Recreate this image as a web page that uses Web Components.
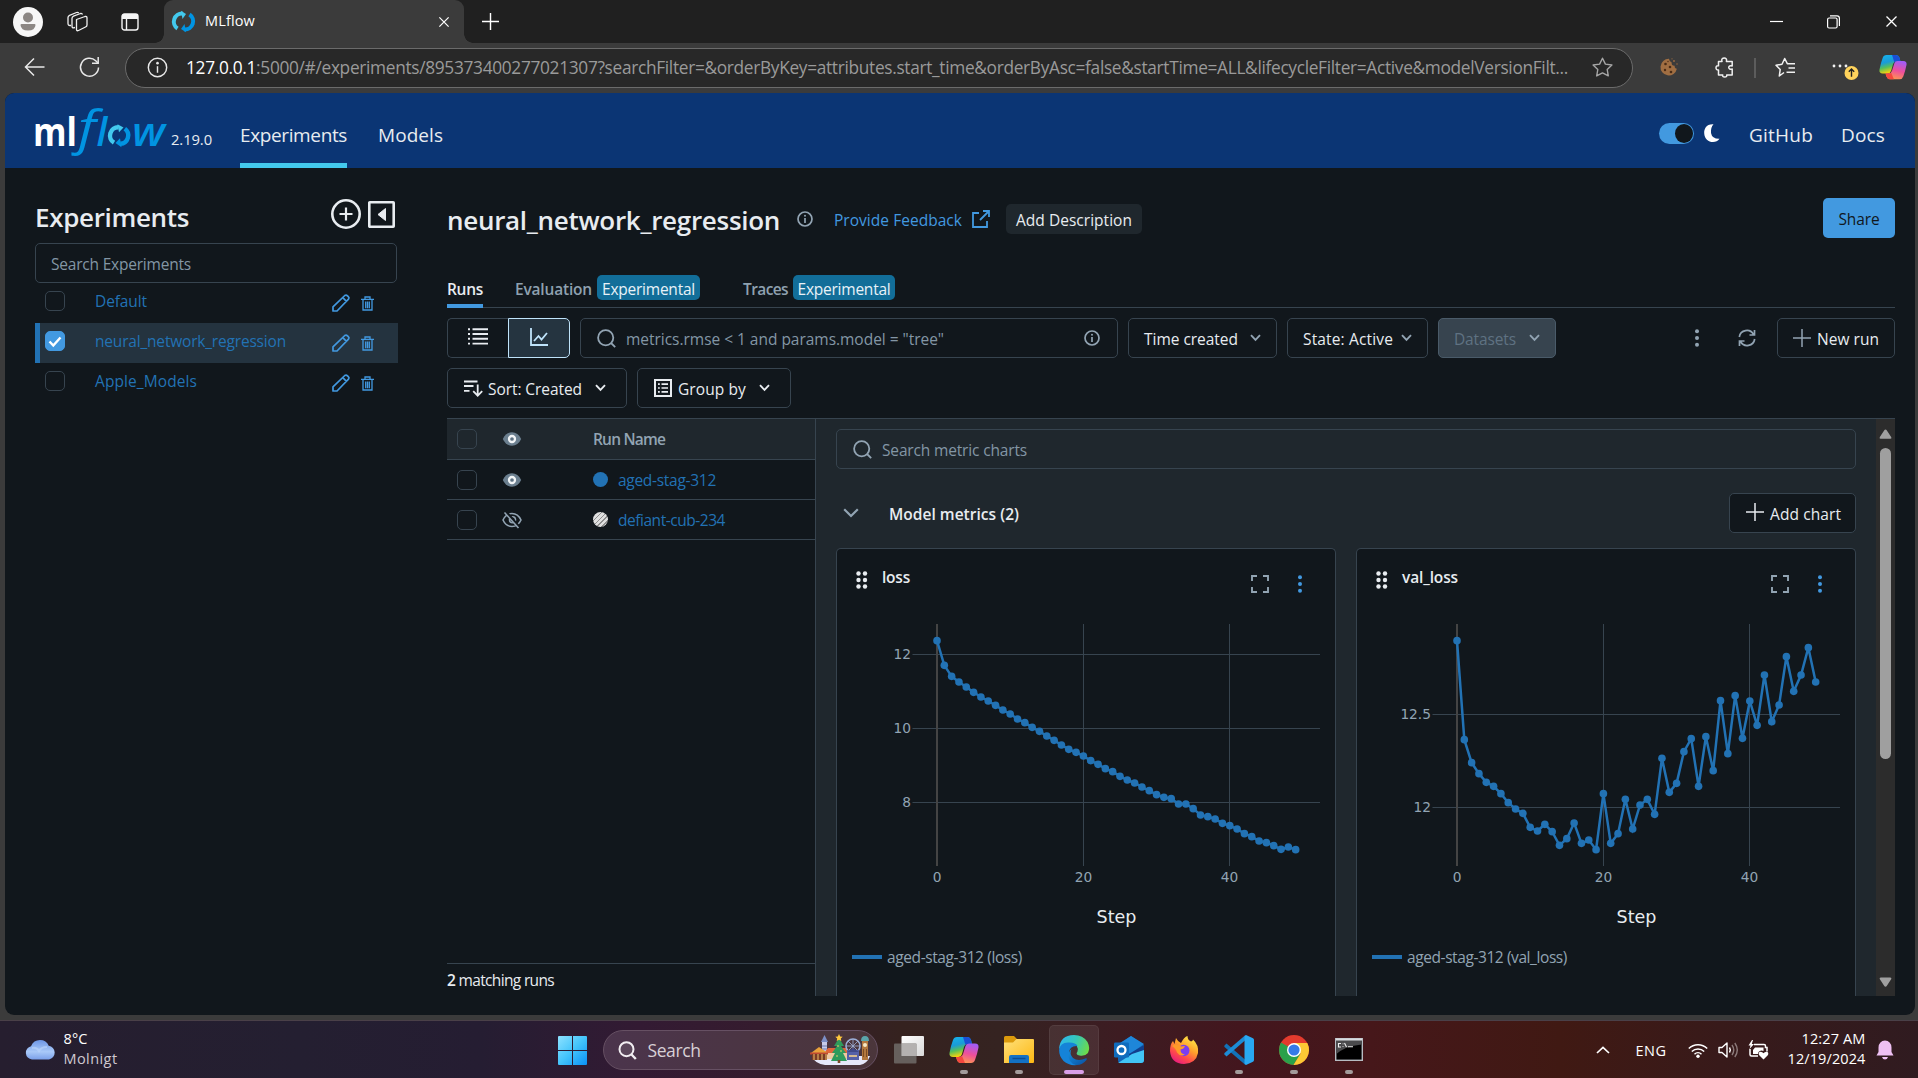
<!DOCTYPE html>
<html lang="en">
<head>
<meta charset="utf-8">
<title>MLflow</title>
<style>
html,body{margin:0;padding:0;height:100%;overflow:hidden;background:#3b3b3b}
body{font-family:"Open Sans","Noto Sans",sans-serif;font-size:15.5px;color:#e8ecf0;display:flex;flex-direction:column}
</style>
</head>
<body>
<browser-tabs></browser-tabs>
<browser-toolbar></browser-toolbar>
<app-window></app-window>
<task-bar></task-bar>
<script>
const ICONS = {
avatar:[30,30,`<circle cx="15" cy="15" r="15" fill="#f7f7f7"/><circle cx="15" cy="10.5" r="5" fill="#8c8784"/><path d="M7.5 18q0-1 1-1h13q1 0 1 1q-.5 5.5-7.5 5.5t-7.5-5.5z" fill="#8c8784"/>`],
workspaces:[21,21,`<g fill="none" stroke="#f0f0f0" stroke-width="1.3" stroke-linejoin="round"><path d="M9.5 8.5l8.5-3q2-.5 2 1.5v7q0 1.5-1.5 2l-7 3.5q-2 .8-2-1z"/><path d="M8 16.5l-1.5.3q-1.500 0-1.500-1.500v-8q0-1.500 1.500-2.200l7-2.600q1.500-.4 2 1"/><path d="M4 14.500h-1q-2 0-2-2v-6q0-1.500 1.500-2.200l7-2.800q1.500-.5 2.200.7"/></g>`],
tabaction:[18,18,`<path d="M3 1h12q2 0 2 2v3H1V3q0-2 2-2z" fill="#f5f5f5"/><rect x="1" y="1" width="16" height="16" rx="2.5" fill="none" stroke="#f5f5f5" stroke-width="1.4"/><path d="M5.5 5v12" stroke="#f5f5f5" stroke-width="1.4"/>`],
favicon:[21,21,`<path d="M4.5 17.5A8.2 8.2 0 0 1 9.5 2.5" fill="none" stroke="#43c9ed" stroke-width="4"/><path d="M8-.2l5 3.200-3.500 5z" fill="#43c9ed"/><path d="M16.5 3.5A8.2 8.2 0 0 1 11.5 18.5" fill="none" stroke="#0194e2" stroke-width="4"/><path d="M13 21.200l-5-3.200 3.500-5z" fill="#0194e2"/>`],
x:[13,13,`<path d="M1.5 1.5l10 10M11.5 1.5l-10 10" stroke="#fff" stroke-width="1.3"/>`],
plus:[18,18,`<path d="M9 0v18M0 9h18" stroke="currentColor" stroke-width="1.5"/>`],
min:[13,13,`<path d="M0 6.5h13" stroke="#fff" stroke-width="1.2"/>`],
max:[13,14,`<rect x=".6" y="3" width="9.5" height="10" rx="1.5" fill="none" stroke="#fff" stroke-width="1.2"/><path d="M3 .8h7q2.400 0 2.400 2.400V11" fill="none" stroke="#fff" stroke-width="1.2"/>`],
back:[21,20,`<path d="M20.5 10H1.5M10 1.5L1.5 10l8.5 8.5" fill="none" stroke="#e8e8e8" stroke-width="1.5"/>`],
reload:[21,22,`<path d="M19.5 11.5a9 9 0 1 1-2.800-6.800L19 7" fill="none" stroke="#e8e8e8" stroke-width="1.5"/><path d="M19.200 1v6.200H13" fill="none" stroke="#e8e8e8" stroke-width="1.5"/>`],
info:[16,16,`<circle cx="8" cy="8" r="7" fill="none" stroke="currentColor" stroke-width="var(--sw,1.7)"/><path d="M8 7v5" stroke="currentColor" stroke-width="var(--sw,1.7)"/><circle cx="8" cy="4.7" r="1" fill="currentColor"/>`],
star:[21,20,`<path d="M10.500 1.200l2.900 5.900 6.500.9-4.700 4.500 1.100 6.400-5.800-3-5.800 3 1.100-6.400L1.100 8l6.500-.9z" fill="none" stroke="#a6a6a6" stroke-width="1.4" stroke-linejoin="round"/>`],
cookie:[18,18,`<path d="M9 .8a8.300 8.300 0 1 0 7.900 10q-2.600-.4-2.200-3-3.400.2-3-3.200Q9.400 3.900 9 .8z" fill="#a06e42"/><g fill="#4a2c16"><circle cx="5.5" cy="6" r="1.3"/><circle cx="10" cy="9" r="1.3"/><circle cx="5" cy="12" r="1.2"/><circle cx="11" cy="14" r="1.3"/><circle cx="8" cy="3.5" r=".7"/></g><circle cx="14" cy="3" r=".9" fill="#a06e42"/><circle cx="17" cy="6" r=".7" fill="#a06e42"/><circle cx="12" cy=".8" r=".6" fill="#a06e42"/>`],
puzzle:[19,21,`<path d="M3.500 4.500H7C6 1.800 7.800 1 9.200 1s3 .9 2.200 3.500H17.200V9q-3.200-.8-3.500 1.500.3 2.300 3.500 1.500V18h-5.500q.5 2-2 2t-2-2H3.500v-5q-2.500.2-2.500-2.200t2.500-2z" fill="none" stroke="#f0f0f0" stroke-width="1.5" stroke-linejoin="round"/>`],
favs:[21,21,`<path d="M9 15.500L4.300 19l.9-6.400L1 8.200l6-.9L9.700 1.500l2.600 5.200H20M13.500 11H20M11.500 15.200H20" fill="none" stroke="#f0f0f0" stroke-width="1.5" stroke-linejoin="round"/>`],
more:[27,26,`<g fill="#f2f2f2"><circle cx="2" cy="12" r="1.4"/><circle cx="8" cy="12" r="1.4"/><circle cx="14" cy="12" r="1.4"/></g><circle cx="19.5" cy="19" r="7" fill="#ffd35c"/><path d="M19.500 22.800v-7.300M16.800 17.800l2.700-2.700 2.700 2.700" fill="none" stroke="#222" stroke-width="1.4"/>`],
copilot:[30,28,`<defs><linearGradient id="a" x1="0" y1="0" x2=".3" y2="1"><stop offset="0" stop-color="#16b5ee"/><stop offset=".45" stop-color="#1a9bd8"/><stop offset=".7" stop-color="#56c05a"/><stop offset="1" stop-color="#fdd20a"/></linearGradient><linearGradient id="b" x1=".6" y1="0" x2=".3" y2="1"><stop offset="0" stop-color="#a35cf5"/><stop offset=".5" stop-color="#ee4f9b"/><stop offset="1" stop-color="#ff9a4c"/></linearGradient></defs><path d="M8 1h10q3 0 4 3l1 4h-4q-3 0-4 3l-2 7q-1 3-4 3H4q-4 0-3.500-4Q2 9 4 4q1-3 4-3z" fill="url(#a)"/><path d="M14 1h4q3 0 4 3l1 4h-4q-2 0-2.500 1z" fill="#1a4fd6"/><path d="M22 27H12q-3 0-4-3l-1-3h3q3 0 4-3l2.500-8q.8-2.500 3.500-2.500h6q4 0 3.500 4Q28 19 26 24q-1 3-4 3z" fill="url(#b)"/><path d="M16 27h-4q-3 0-4-3l-1-3h3q2 0 3-1z" fill="#f4473f"/>`],
logo:[134,54,`<g font-family="Open Sans" font-size="39"><text x="-2" y="41.5" fill="#fff" font-weight="700" textLength="44" lengthAdjust="spacingAndGlyphs">ml</text><g fill="#0194e2" font-style="italic" font-weight="600"><text x="43" y="41" font-size="47" font-weight="500" textLength="18" lengthAdjust="spacingAndGlyphs">f</text><text x="61.500" y="41.5">l</text><text x="97" y="41.5" textLength="33" lengthAdjust="spacingAndGlyphs">w</text></g></g><path d="M79 38.700A8.300 8.300 0 0 1 83.500 23.300" fill="none" stroke="#43c9ed" stroke-width="4.4"/><path d="M82.500 20.200l6 3.300-4.500 4.800z" fill="#43c9ed"/><path d="M89.800 24.800A8.300 8.300 0 0 1 85.300 39.800" fill="none" stroke="#0194e2" stroke-width="4.4"/><path d="M86.500 43.200l-6-4.200 4.500-4.800z" fill="#0194e2"/>`],
moon:[16,18,`<path d="M9.500.2C2-.2 0 5 .2 9.200.4 15 4.500 18 9 18q4 0 6.500-3.200Q8 15 7 9 6.500 3.500 9.500.2z" fill="#fff"/>`],
pluscircle:[30,30,`<circle cx="15" cy="15" r="13.700" fill="none" stroke="#e8ecf0" stroke-width="2.6"/><path d="M15 8.500v13M8.500 15h13" stroke="#e8ecf0" stroke-width="2.2"/>`],
collapse:[27,27,`<rect x="1.300" y="1.300" width="24.400" height="24.400" rx=".5" fill="none" stroke="#e8ecf0" stroke-width="2.6"/><path d="M17.500 7.500v12L10 13.500z" fill="#e8ecf0" stroke="#e8ecf0" stroke-width="1" stroke-linejoin="round"/>`],
pencil:[18,18,`<path d="M1 17v-4.200L12.800 1.500q1.400-1 2.700.3l.8.8q1.300 1.300.2 2.600L5 17zM10.800 3.700l3.600 3.600" fill="none" stroke="#4299e0" stroke-width="1.7" stroke-linejoin="round"/>`],
trash:[13,15,`<path d="M0 3.300h13M4 3V1h5v2M2 3.500V14h9V3.500M4.700 5.500v6.700M6.500 5.500v6.700M8.300 5.500v6.700" fill="none" stroke="#4299e0" stroke-width="1.3"/>`],
external:[18,18,`<path d="M7 3H1v14h14v-6M11 1h6v6M17 1L8 10" fill="none" stroke="#4299e0" stroke-width="1.8"/>`],
list:[20,17,`<path d="M4.500 1.200H20M4.500 6H20M4.500 10.800H20M4.500 15.600H20" stroke="#e8ecf0" stroke-width="1.9"/><path d="M0 1.200h2M0 6h2M0 10.800h2M0 15.600h2" stroke="#e8ecf0" stroke-width="1.9"/>`],
chart:[18,18,`<path d="M1 0v17h17" fill="none" stroke="#bfe3fa" stroke-width="1.8"/><path d="M4 13l4.500-5 3 3.500L17 5" fill="none" stroke="#bfe3fa" stroke-width="1.8"/>`],
search:[19,19,`<circle cx="8.700" cy="8.700" r="7.600" fill="none" stroke="#92a4b3" stroke-width="1.8"/><path d="M14 14l4.200 4.200" stroke="#92a4b3" stroke-width="1.8"/>`],
chev:[11,8,`<path d="M1 1.200l4.500 4.600L10 1.200" fill="none" stroke="currentColor" stroke-width="1.9"/>`],
bigchev:[16,10,`<path d="M1.200 1.200L8 8l6.800-6.800" fill="none" stroke="#92a4b3" stroke-width="2.2"/>`],
kebab:[4,18,`<g fill="currentColor"><circle cx="2" cy="2.300" r="2"/><circle cx="2" cy="9" r="2"/><circle cx="2" cy="15.700" r="2"/></g>`],
refresh:[18,18,`<path d="M1.300 8A7.600 7.600 0 0 1 15.500 5.500M16.700 10A7.600 7.600 0 0 1 2.500 12.500M16.500 1v5h-5M1.500 17v-5h5" fill="none" stroke="#92a4b3" stroke-width="1.7"/>`],
sort:[19,17,`<path d="M0 1.500h13.500M0 6h9.500M0 10.800h5.500M13.700 4.500V15.500M9.200 11.200l4.500 4.500 4.500-4.500" fill="none" stroke="#e8ecf0" stroke-width="1.8"/>`],
group:[18,18,`<rect x="1" y="1" width="16" height="16" fill="none" stroke="#e8ecf0" stroke-width="2"/><path d="M7.500 5.200H14M7.500 9H14M7.500 12.800H14M4 5.200h1.800M4 9h1.800M4 12.800h1.800" stroke="#e8ecf0" stroke-width="1.7"/>`],
eye:[20,20,`<path d="M.8 10Q4 3.300 10 3.300T19.200 10Q16 16.700 10 16.700T.8 10z" fill="#6b7f8f"/><circle cx="10" cy="10" r="3" fill="#5d7283" stroke="#f2f5f7" stroke-width="2.3"/>`],
eyeoff:[20,20,`<path d="M1 10Q4 3.500 10 3.500T19 10Q16 16.500 10 16.500T1 10z" fill="none" stroke="#92a4b3" stroke-width="1.6"/><circle cx="10.500" cy="9.700" r="3" fill="none" stroke="#92a4b3" stroke-width="1.6"/><path d="M3.500 1.500l14 16" stroke="#11171c" stroke-width="3"/><path d="M2.500 2.500l14 15.500" stroke="#92a4b3" stroke-width="1.6"/>`],
drag:[12,18,`<g fill="#e8ecf0"><circle cx="2.500" cy="2.500" r="2.200"/><circle cx="9" cy="2.500" r="2.200"/><circle cx="2.500" cy="9" r="2.200"/><circle cx="9" cy="9" r="2.200"/><circle cx="2.500" cy="15.500" r="2.200"/><circle cx="9" cy="15.500" r="2.200"/></g>`],
full:[18,18,`<path d="M1 6V1h5M12 1h5v5M17 12v5h-5M6 17H1v-5" fill="none" stroke="#92a4b3" stroke-width="1.9"/>`],
up:[13,10,`<path d="M6.500.5q.8 0 1.200.8l4.600 7q.5 1.500-1 1.500H1.700q-1.500 0-1-1.500l4.600-7q.4-.8 1.200-.8z" fill="#9f9f9f"/>`],
down:[13,10,`<path d="M6.500 9.800q.8 0 1.200-.8l4.600-7Q12.800.5 11.300.5H1.700Q.2.5.7 2l4.600 7q.4.8 1.200.8z" fill="#9f9f9f"/>`],
cloud:[31,20,`<defs><linearGradient id="c" x1="0" y1="0" x2="0" y2="1"><stop offset="0" stop-color="#6d96e6"/><stop offset=".6" stop-color="#a9c9f8"/><stop offset="1" stop-color="#7ba0ea"/></linearGradient></defs><path d="M7 19.500a6.700 6.700 0 0 1-1-13.200Q8.500 0 15 0t8.700 5.700A7 7 0 0 1 24 19.500z" fill="url(#c)"/><path d="M7 8q5-1 7 3 2-4 8-4" fill="none" stroke="#bdd5fb" stroke-width="2" opacity=".6"/>`],
start:[29,29,`<defs><linearGradient id="w" x1="0" y1="0" x2="1" y2="1"><stop offset="0" stop-color="#8ee2ff"/><stop offset=".5" stop-color="#43c4fb"/><stop offset="1" stop-color="#0a90f5"/></linearGradient></defs><path d="M1 0h13v14H0V1q0-1 1-1zM15 0h13q1 0 1 1v13H15zM0 15h14v14H1q-1 0-1-1zM15 15h14v13q0 1-1 1H15z" fill="url(#w)"/>`],
magnify:[19,19,`<circle cx="8.500" cy="8.200" r="7" fill="#ffffff18" stroke="#f2eef2" stroke-width="2"/><path d="M13.500 13.500l4.300 4.500" stroke="#f2eef2" stroke-width="2.4"/>`],
xmas:[61,32,`<path d="M2 22h58q-3 8-10 9H15Q5 30 2 22z" fill="#e7e9fb"/><rect x="12" y="7" width="5" height="13" fill="#c8cbe8"/><path d="M11 8l3.500-7 3.500 7z" fill="#7c8fc6"/><path d="M12 12h5M12 15h5" stroke="#6a78ad"/><path d="M14 19l4-5h18l3 5z" fill="#e2653a"/><rect x="15" y="19" width="23" height="6" fill="#f0c9a0"/><path d="M1 19l8-6 9 6z" fill="#e9a13a"/><path d="M0 19.500h18" stroke="#c04a30" stroke-width="2"/><rect x="2" y="20" width="15" height="6" fill="#7a3b24"/><path d="M4 20v6M8 20v6M12 20v6M16 20v6" stroke="#f2c26b"/><circle cx="43" cy="12" r="7" fill="none" stroke="#9db0d8" stroke-width="1.6"/><path d="M43 5v14M36 12h14M38 7l10 10M48 7L38 17" stroke="#9db0d8" stroke-width=".8"/><rect x="37" y="16" width="12" height="10" fill="#5561a8"/><path d="M37 18l6-4 6 4" fill="#3f4988"/><path d="M39 22h8" stroke="#ffd98a" stroke-width="1.5"/><rect x="52" y="6" width="6" height="20" fill="#b4783f"/><path d="M51 7q0-5 4-5t4 5z" fill="#5aa5ab"/><circle cx="55" cy="11" r="2" fill="#f6e8c6"/><path d="M53.500 15v8M56.500 15v8" stroke="#7d4d24"/><path d="M29 4l5 8h-3l5 7h-3l4 8H21l4-8h-3l5-7h-3z" fill="#2f9b5c"/><rect x="27.700" y="26" width="2.600" height="3" fill="#7a4a28"/><path d="M29 0l1.200 2.400 2.500.3-1.900 1.700.5 2.500L29 5.700l-2.300 1.200.5-2.500-1.900-1.700 2.500-.3z" fill="#ffc83d"/><g fill="#ffd76a"><circle cx="28" cy="12" r=".8"/><circle cx="31" cy="17" r=".8"/><circle cx="27" cy="22" r=".8"/></g>`],
taskview:[30,28,`<defs><linearGradient id="t" x1="0" y1="0" x2="1" y2="1"><stop offset="0" stop-color="#fff"/><stop offset="1" stop-color="#d9d9d9"/></linearGradient></defs><rect x="7.500" y="0" width="22.500" height="20" rx="1" fill="url(#t)"/><rect x="0" y="7.500" width="22.500" height="20" rx="1" fill="#6f6b69" opacity=".85"/><rect x="7.500" y="7.500" width="15" height="12.500" fill="#b4b1b0"/>`],
explorer:[30,27,`<defs><linearGradient id="e" x1="0" y1="0" x2="1" y2="1"><stop offset="0" stop-color="#ffe07a"/><stop offset="1" stop-color="#fdb813"/></linearGradient></defs><path d="M1.500 0H10l3 3h7v6H0V1.500Q0 0 1.500 0z" fill="#dc9a0c"/><path d="M0 6.500h9L12.500 3H29q1 0 1 1v22q0 1-1 1H0z" fill="url(#e)"/><path d="M5 27v-6q0-2 2-2h16q2 0 2 2v6z" fill="#1371c4"/><path d="M8.500 22.500h13" stroke="#0a4c94" stroke-width="1.5"/>`],
edge:[30,30,`<defs><linearGradient id="g" x1="0" y1=".3" x2="1" y2=".6"><stop offset="0" stop-color="#2db7ee"/><stop offset=".5" stop-color="#36c7b8"/><stop offset="1" stop-color="#6ddb4a"/></linearGradient><linearGradient id="h" x1="0" y1="0" x2="1" y2="1"><stop offset="0" stop-color="#1491e0"/><stop offset="1" stop-color="#0b4f9f"/></linearGradient></defs><path d="M.1 14Q1 0 15 0q9 0 13.500 7 3 6 .5 11-3 3.500-8.500 2.500-4.500-1-2-4Q20 10 13 8.500 5 8 .1 14z" fill="url(#g)"/><path d="M18.500 11q-8-.5-8.500 7 0 9.500 8 12Q10 31 4.500 26 0 21 .1 15q1-8 10-7.500 7 .2 8.400 3.500z" fill="#1583d8"/><path d="M12.500 14q-2.500 4.500 1.500 9 5 4 13 .3 1.500-.3.500 1.700Q23 30.500 17 30 9 28 9.500 19q.5-3 3-5z" fill="url(#h)"/>`],
outlook:[30,27,`<path d="M4 9L17 0l13 9v15q0 3-3 3H7q-3 0-3-3z" fill="#1066b8"/><path d="M6 7l11-7 13 8-14 10z" fill="#1e86d9"/><path d="M15 18L30 9v6L14 26z" fill="#123f8c"/><path d="M4 27l14-9 12-4v10q0 3-3 3z" fill="#42c5f5"/><rect x="0" y="6.500" width="15" height="15" rx="1.300" fill="#0f6cbd"/><circle cx="7.500" cy="14" r="4" fill="none" stroke="#fff" stroke-width="2.3"/>`],
firefox:[28,28,`<defs><linearGradient id="f" x1=".8" y1="0" x2=".2" y2="1"><stop offset="0" stop-color="#fff04a"/><stop offset=".4" stop-color="#ffa12b"/><stop offset=".7" stop-color="#ff4a4a"/><stop offset="1" stop-color="#e31587"/></linearGradient></defs><path d="M14 28Q1 27.500 0 15q0-7 3-10l1.500 3L6 2q2 4 5 5 3-6 6.500-7 0 4 3.500 5.500 2-.5 2-2Q29 9 28 17q-2 10.500-14 11z" fill="url(#f)"/><circle cx="13.700" cy="14.500" r="5.800" fill="#7a3df0"/><path d="M2 10q5-3 9 .5l4-.5q-1 3-4.500 3.500 0 4.500 4.500 5-5 2.500-8-2-1-4-5-6.500z" fill="#ff9a28"/>`],
vscode:[30,30,`<path d="M2.500 8.500L21.500 25v5L.5 12q-.5-.8 0-1.500z" fill="#1272b8"/><path d="M2.500 21.500L21.500 5V0L.5 18q-.5.8 0 1.500z" fill="#1c8cd6"/><path d="M22 0l7 3.200q1 .5 1 1.800v20q0 1.300-1 1.800L22 30q-1.500-.5-1.500-2V2q0-1.500 1.500-2z" fill="#29a8f2"/>`],
chrome:[30,30,`<circle cx="15" cy="15" r="15" fill="#e33b2e"/><path d="M15 15L2 7.500A15 15 0 0 0 14.500 30L21.500 18.700z" fill="#2aa14a"/><path d="M15 8h13.300A15 15 0 0 1 14.500 30l7-11.300z" fill="#fcc934"/><circle cx="15" cy="15" r="7" fill="#fff"/><circle cx="15" cy="15" r="5.600" fill="#357ae8"/>`],
cmd:[28,23,`<rect x=".7" y=".7" width="26.600" height="21.600" fill="#000" stroke="#b7bcc2" stroke-width="1.4"/><path d="M1.400 1.400h25.200v5Q10 8 1.400 16z" fill="#4a4a4c"/><path d="M1 1.500h26" stroke="#d8dce0" stroke-width="2"/><path d="M6 5.500H3.500v3.500H6M8 5.500v.8M8 8v.8M9.500 5l2 4M13 8.800h5" stroke="#eee" stroke-width="1.1" fill="none"/>`],
caret:[14,8,`<path d="M1 7l6-5.700L13 7" fill="none" stroke="#fff" stroke-width="1.7"/>`],
wifi:[20,15,`<g fill="none" stroke="#fff" stroke-width="1.5"><path d="M.8 5.500a13 13 0 0 1 18.400 0M3.800 8.500a8.800 8.800 0 0 1 12.400 0M6.500 11.200a5 5 0 0 1 7 0"/></g><circle cx="10" cy="13.200" r="1.700" fill="#fff"/>`],
sound:[21,16,`<path d="M1 5.500h3L9 1v14l-5-4.500H1z" fill="none" stroke="#fff" stroke-width="1.4" stroke-linejoin="round"/><path d="M11.500 5.500q1.600 2.500 0 5" fill="none" stroke="#fff" stroke-width="1.4"/><path d="M14 3q3.500 5 0 10M16.800 1q5 7 0 14" fill="none" stroke="#8c7a7a" stroke-width="1.4"/>`],
battery:[21,20,`<path d="M6 4.500h10q1.500 0 1.500 1.500v1.500h1.500v4M2 9v5.500q0 1.500 1.500 1.500H10" fill="none" stroke="#fff" stroke-width="1.5"/><path d="M7 7.500h8.500v3.500q-3-1.500-5 1l-.5 2H5v-4z" fill="#fff"/><path d="M4 0L.5 5.500h2L1.500 9 6 4H3.800L5 0z" fill="#fff"/><path d="M15.500 19.500L11 15q-1-3 1.500-3.300 2 0 3 1.600 1-1.600 3-1.600 2.500.3 1.500 3.300z" fill="#fff"/>`],
bell:[18,20,`<path d="M9 .5q6 .3 6.500 7V12l2 3.500H.5L2.500 12V7.500Q3 .8 9 .5zM6 17h6q-.8 2.500-3 2.500T6 17z" fill="#eec0f3"/>`]
};

const define = (name, html, after) => customElements.define(name, class extends HTMLElement {
  constructor(){ super(); this.attachShadow({mode:'open'}); }
  connectedCallback(){
    const a = n => this.getAttribute(n) ?? '';
    this.shadowRoot.innerHTML = '<style>*{box-sizing:border-box}</style>' + (typeof html === 'function' ? html(a, this) : html);
    if (after) after(this);
  }
});

define('ui-icon', a => {
  const [w,h,body] = ICONS[a('name')];
  const W = a('w') || w, H = a('h') || (a('w') ? h * a('w') / w : h);
  return `<style>:host{display:block;flex:none;width:${W}px;height:${H}px}svg{display:block;overflow:visible}</style><svg width="${W}" height="${H}" viewBox="0 0 ${w} ${h}" preserveAspectRatio="none">${body}</svg>`;
});

define('check-box', a => `<style>:host{display:block;flex:none;width:20px;height:20px;border:1px solid ${a('on')?'#4299e0':'#37444f'};border-radius:5px;box-sizing:border-box;background:${a('on')?'#4299e0':'transparent'}}svg{display:block}</style>${a('on')?'<svg width="18" height="18"><path d="M3.5 9.5l3.8 4L14.5 5.5" fill="none" stroke="#fff" stroke-width="2.4"/></svg>':''}`);

define('browser-tabs', `<style>
:host{display:flex;align-items:center;height:43px;background:#202020;padding:0 20px 0 13px;box-sizing:border-box;flex:none}
.tab{display:flex;align-items:center;width:300px;height:43px;background:#3b3b3b;border-radius:9px 9px 0 0;margin-left:25px;padding:0 14px 0 9px;position:relative;font-size:14.5px;color:#fff}
.tab:before,.tab:after{content:"";position:absolute;bottom:0;width:9px;height:9px}
.tab:before{left:-9px;background:radial-gradient(circle at 0 0,transparent 8.5px,#3b3b3b 9px)}
.tab:after{right:-9px;background:radial-gradient(circle at 100% 0,transparent 8.5px,#3b3b3b 9px)}
</style><ui-icon name="avatar"></ui-icon><ui-icon name="workspaces" style="margin-left:24px"></ui-icon><ui-icon name="tabaction" style="margin-left:33px"></ui-icon>
<div class="tab"><ui-icon name="favicon"></ui-icon><fit-text w="50" style="margin-left:11px;--dy:-1px">MLflow</fit-text><ui-icon name="x" w="12" style="margin-left:auto"></ui-icon></div>
<ui-icon name="plus" w="17" style="margin-left:18px;color:#fff"></ui-icon>
<ui-icon name="min" style="margin-left:auto"></ui-icon><ui-icon name="max" style="margin-left:44px"></ui-icon><ui-icon name="x" style="margin-left:45px"></ui-icon>`);

define('browser-toolbar', `<style>
:host{display:flex;align-items:center;height:50px;background:#3b3b3b;padding:0 11px 0 24px;box-sizing:border-box;flex:none}
ui-icon{transform:translateY(-1px)}
.url{display:flex;align-items:center;margin-left:25px;width:1508px;height:40px;border:1px solid #6b6b6b;border-radius:20px;background:#282828;padding:0 19px 0 21px;font-size:17.3px;color:#9a9a9a}
b{font-weight:400;color:#fff}.sep{width:2px;height:20px;background:#5c5c5c;margin-left:20px}
</style><ui-icon name="back"></ui-icon><ui-icon name="reload" style="margin-left:34px"></ui-icon>
<div class="url"><ui-icon name="info" w="21" style="color:#e8e8e8;--sw:1.1"></ui-icon><fit-text w="1382" style="margin-left:18px;--dy:-1px"><b>127.0.0.1</b>:5000/#/experiments/895373400277021307?searchFilter=&amp;orderByKey=attributes.start_time&amp;orderByAsc=false&amp;startTime=ALL&amp;lifecycleFilter=Active&amp;modelVersionFilt...</fit-text><ui-icon name="star" style="margin-left:auto"></ui-icon></div>
<ui-icon name="cookie" style="margin-left:27px"></ui-icon><ui-icon name="puzzle" style="margin-left:37px"></ui-icon><div class="sep"></div><ui-icon name="favs" style="margin-left:19px"></ui-icon><ui-icon name="more" style="margin-left:36px"></ui-icon><ui-icon name="copilot" w="28" style="margin-left:auto"></ui-icon>`);

define('app-header', `<style>
:host{display:flex;align-items:center;height:75px;background:#0b3574;padding:0 30px;box-sizing:border-box;font-size:19px;color:#e8ecf0;flex:none}
nav{display:flex;height:75px;gap:31px;margin-left:28px}nav div{display:flex;align-items:center;border-bottom:5px solid transparent;padding-top:5px}nav .on{border-color:#43c9ed}
.sw{width:35px;height:21px;border-radius:11px;background:#4299e0;padding:1px;display:flex;justify-content:flex-end;margin:5px 10px 0 auto}.sw i{width:18px;height:19px;border-radius:50%;background:#11171c}
</style><ui-icon name="logo"></ui-icon><fit-text w="41" style="font-size:14.8px;--dy:8px;margin-left:2px">2.19.0</fit-text>
<nav><div class="on"><fit-text w="107" style="--dy:4px">Experiments</fit-text></div><div><fit-text w="65" style="--dy:4px">Models</fit-text></div></nav>
<div class="sw"><i></i></div><ui-icon name="moon" style="margin-top:5px"></ui-icon>
<fit-text w="64" style="--dy:4px;margin-left:29px">GitHub</fit-text><fit-text w="44" style="--dy:4px;margin-left:28px">Docs</fit-text>`);

define('experiment-row', a => `<style>
:host{display:flex;align-items:center;height:40px;box-sizing:border-box;border-left:5px solid ${a('on')?'#2272b4':'transparent'};background:${a('on')?'#24333f':'transparent'};padding:0 24px 0 5px;color:#2272b4}
</style><check-box on="${a('on')}" style="margin-bottom:4px"></check-box><fit-text w="${a('w')}" style="margin-left:30px;--dy:-2px">${a('label')}</fit-text><ui-icon name="pencil" style="margin-left:auto"></ui-icon><ui-icon name="trash" style="margin-left:11px"></ui-icon>`);

define('experiment-sidebar', `<style>
:host{display:flex;flex-direction:column;width:363px;flex:none}
header{display:flex;align-items:center;height:32px;margin-bottom:13px;font-size:26px;font-weight:600}
.s{height:40px;width:362px;border:1px solid #37444f;border-radius:5px;display:flex;align-items:center;padding-left:15px;color:#8396a5}
</style><header><fit-text w="154" style="--dy:3px">Experiments</fit-text><ui-icon name="pluscircle" style="margin-left:auto"></ui-icon><ui-icon name="collapse" style="margin:0 3px 0 7px"></ui-icon></header>
<div class="s"><fit-text w="140">Search Experiments</fit-text></div>
<experiment-row label="Default" w="52"></experiment-row><experiment-row on="1" label="neural_network_regression" w="191"></experiment-row><experiment-row label="Apple_Models" w="102"></experiment-row>`);

define('ui-button', a => `<style>
:host{display:flex;align-items:center;height:40px;border:1px solid #37444f;border-radius:5px;box-sizing:border-box;padding:0 15px;background:#11171c;width:${a('bw')}px;flex:none}
ui-icon.c{margin-left:auto}
:host([wide]){padding:0 20px 0 16px}
:host([disabled]){background:#37444f;color:#5f7282;border-color:#4a5b69}
</style><slot name="icon"></slot><fit-text w="${a('w')}">${a('label')}</fit-text>${a('chev')?`<ui-icon class="c" name="chev" style="color:${a('chev')}"></ui-icon>`:''}`);

define('page-title', `<style>
:host{display:flex;align-items:center;height:42px}
.d{background:#1f272d;border-radius:5px;height:30px;width:136px;display:flex;align-items:center;justify-content:center;margin-left:16px}
.share{background:#4299e0;color:#11171c;width:72px;height:40px;border-radius:5px;display:flex;align-items:center;justify-content:center;margin:0 0 2px auto}
</style><fit-text w="333" style="font-size:26px;font-weight:600;--dy:1px">neural_network_regression</fit-text><ui-icon name="info" style="margin-left:17px;color:#92a4b3"></ui-icon>
<fit-text w="128" style="margin-left:21px;color:#4299e0">Provide Feedback</fit-text><ui-icon name="external" style="margin-left:10px"></ui-icon><div class="d"><fit-text w="116">Add Description</fit-text></div><div class="share"><fit-text w="41">Share</fit-text></div>`);

define('view-tabs', `<style>
:host{display:flex;height:33px;margin-top:35px;box-shadow:inset 0 -1px #37444f;color:#8fa1b0;font-weight:600}
div{display:flex;height:33px;padding-bottom:8px;align-items:center;box-sizing:border-box}.on{color:#e8ecf0;border-bottom:4px solid #4299e0;padding-bottom:4px}
span{display:flex;align-items:center;justify-content:center;height:25px;background:#126e99;border-radius:5px;color:#e8f2f8;font-weight:400;margin-left:5px}
</style><div class="on"><fit-text w="36">Runs</fit-text></div><div style="margin-left:32px"><fit-text w="77">Evaluation</fit-text><span style="width:103px"><fit-text w="93">Experimental</fit-text></span></div><div style="margin-left:43px"><fit-text w="45">Traces</fit-text><span style="width:102px"><fit-text w="93">Experimental</fit-text></span></div>`);

define('run-controls', `<style>
:host{display:flex;flex-direction:column;gap:10px;padding:10px 0}
.r{display:flex;align-items:center;gap:10px}
.seg{display:flex;width:123px;height:40px}.seg div{flex:1;display:flex;align-items:center;justify-content:center;border:1px solid #37444f;border-right:0;border-radius:5px 0 0 5px}.seg .on{border:1px solid #bfe3fa;border-radius:0 5px 5px 0;background:#253440;padding-bottom:2px}
.s{display:flex;align-items:center;height:40px;width:538px;border:1px solid #37444f;border-radius:5px;padding:0 17px 0 16px;color:#8396a5}
</style><div class="r"><div class="seg"><div><ui-icon name="list" style="margin-bottom:4px"></ui-icon></div><div class="on"><ui-icon name="chart"></ui-icon></div></div>
<div class="s"><ui-icon name="search"></ui-icon><fit-text w="318" style="margin-left:10px">metrics.rmse &lt; 1 and params.model = "tree"</fit-text><ui-icon name="info" style="margin-left:auto;color:#92a4b3"></ui-icon></div>
<ui-button bw="149" w="94" label="Time created" chev="#92a4b3"></ui-button><ui-button bw="141" w="90" label="State: Active" chev="#92a4b3"></ui-button><ui-button disabled bw="118" w="62" label="Datasets" chev="#92a4b3"></ui-button>
<ui-icon name="kebab" style="margin-left:auto;color:#92a4b3"></ui-icon><ui-icon name="refresh" style="margin:0 11px 0 29px"></ui-icon><ui-button bw="118" w="62" label="New run"><ui-icon slot="icon" name="plus" style="margin:0 6px 0 0;color:#92a4b3"></ui-icon></ui-button></div>
<div class="r"><ui-button wide bw="180" w="94" label="Sort: Created" chev="#e8ecf0"><ui-icon slot="icon" name="sort" style="margin-right:5px"></ui-icon></ui-button><ui-button wide bw="154" w="68" label="Group by" chev="#e8ecf0"><ui-icon slot="icon" name="group" style="margin-right:6px"></ui-icon></ui-button></div>`);

define('run-row', a => `<style>
:host{display:flex;align-items:center;height:${a('head')?41:40}px;box-sizing:border-box;border-bottom:1px solid #37444f;padding-left:10px;background:${a('head')?'#1f272d':'transparent'};color:${a('head')?'#92a4b3':'#2272b4'};font-weight:${a('head')?600:400}}
i{width:15px;height:15px;border-radius:50%;margin:0 10px 0 71px;background:${a('dot')}}
</style><check-box></check-box><ui-icon name="${a('icon')}" style="margin-left:25px"></ui-icon>${a('head')?'':'<i></i>'}<fit-text w="${a('w')}" style="--dy:0px;${a('head')?'margin-left:71px':''}">${a('label')}</fit-text>`);

define('runs-table', `<style>
:host{display:flex;flex-direction:column;width:368px;flex:none}
footer{margin-top:auto;border-top:1px solid #37444f;height:33px;display:flex;align-items:center;color:#e8ecf0}
</style><run-row head="1" icon="eye" w="72" label="Run Name"></run-row><run-row icon="eye" dot="#2272b4" w="98" label="aged-stag-312"></run-row><run-row icon="eyeoff" dot="repeating-linear-gradient(135deg,#e0e0e0 0 2.2px,#8f8f8f 2.2px 3.5px)" w="107" label="defiant-cub-234"></run-row>
<footer><fit-text w="107" style="--dy:0px"><b style="font-weight:600">2</b> matching runs</fit-text></footer>`);

const SERIES = {
 loss:[302,376,409,426,441,457,471,483,496,510,522,537,548,562,574,588,601,615,628,637,648,662,673,686,695,709,720,729,741,752,764,772,776,792,792,806,825,830,837,850,857,867,881,890,903,908,917,928,921,929],
 val_loss:[302,599,668,701,727,739,761,788,807,820,862,873,853,875,916,896,849,910,900,929,761,910,881,778,867,795,778,823,655,757,730,635,596,739,590,692,482,641,467,595,483,556,405,545,495,350,454,405,323,426]
};
const TICKS = { loss:[[343,'12'],[565,'10'],[787,'8']], val_loss:[[523,'12.5'],[802,'12']] };

define('metric-chart', a => {
  const k = a('metric'), px = i => 100 + i * 7.32, py = v => (v - 252) / 3 + 20;
  const pts = SERIES[k].map((v,i) => [px(i), py(v)]);
  return `<style>
:host{display:flex;flex-direction:column;width:500px;height:448px;border:1px solid #37444f;border-bottom:0;border-radius:5px 5px 0 0;background:#11171c;box-sizing:border-box}
header{display:flex;align-items:flex-start;height:55px;padding:22px 33px 0 19px;font-weight:600}
svg.p{display:block}svg text{font-family:"DejaVu Sans",sans-serif;font-size:13.75px;fill:#92a4b3}
.l{display:flex;align-items:center;height:22px;margin-top:12px;padding-left:15px;color:#92a4b3}.l i{width:30px;height:4px;background:#2272b4;margin-right:5px}
</style><header><ui-icon name="drag"></ui-icon><fit-text w="${a('tw')}" style="margin:-5px 0 0 14px;--dy:0px">${k}</fit-text><ui-icon name="full" style="margin:4px 29px 0 auto"></ui-icon><ui-icon name="kebab" style="margin-top:4px;color:#4299e0"></ui-icon></header>
<svg class="p" width="498" height="330"><g stroke="#37444f">
${TICKS[k].map(([y])=>`<path d="M75.5 ${Math.round(py(y))+.5}H483"/>`).join('')}
<path d="M246.5 20V262M392.5 20V262"/></g><path d="M100 20V262" stroke="#444" stroke-width="2"/>
<polyline points="${pts.map(p=>p.join()).join(' ')}" fill="none" stroke="#2272b4" stroke-width="2.5"/>
${pts.map(p=>`<circle cx="${p[0]}" cy="${p[1]}" r="3.8" fill="#2272b4"/>`).join('')}
${TICKS[k].map(([y,t])=>`<text x="74" y="${py(y)+5}" text-anchor="end">${t}</text>`).join('')}
<text x="100" y="278" text-anchor="middle">0</text><text x="246.5" y="278" text-anchor="middle">20</text><text x="392.5" y="278" text-anchor="middle">40</text>
<text x="279.5" y="319" text-anchor="middle" style="font-size:17.5px;fill:#e8ecf0">Step</text></svg>
<div class="l"><i></i><fit-text w="${a('lw')}" style="--dy:0px">aged-stag-312 (${k})</fit-text></div>`;
});

define('charts-pane', `<style>
:host{display:flex;flex:1;min-width:0;border-left:1px solid #37444f;background:#1f272d;overflow:hidden}
.m{flex:1;padding:10px 20px 0;min-width:0}
.s{display:flex;align-items:center;height:40px;border:1px solid #37444f;border-radius:5px;padding:0 16px;color:#8396a5}
.h{display:flex;align-items:center;height:40px;margin:24px 0 15px;padding-left:7px;font-weight:600}
.g{display:flex;gap:20px}.b{width:19px;background:#2c2c2c;display:flex;flex-direction:column;align-items:center;padding:10px 1px 9px 0}
.b i{width:11px;height:311px;border-radius:6px;background:#9f9f9f;margin:9px 0 auto}
</style><div class="m"><div class="s"><ui-icon name="search"></ui-icon><fit-text w="145" style="margin-left:10px">Search metric charts</fit-text></div>
<div class="h"><ui-icon name="bigchev"></ui-icon><fit-text w="130" style="margin-left:30px">Model metrics (2)</fit-text><ui-button bw="127" w="71" label="Add chart" style="margin-left:auto;font-weight:400"><ui-icon slot="icon" name="plus" style="margin:-2px 6px 0 1px"></ui-icon></ui-button></div>
<div class="g"><metric-chart metric="loss" tw="28" lw="135"></metric-chart><metric-chart metric="val_loss" tw="56" lw="160"></metric-chart></div></div>
<div class="b"><ui-icon name="up"></ui-icon><i></i><ui-icon name="down"></ui-icon></div>`);

define('app-window', `<style>
:host{display:flex;flex-direction:column;margin:0 3px 5px 5px;height:922px;flex:none;border-radius:9px;overflow:hidden;background:#11171c}
.b{display:flex;gap:49px;padding:30px 20px 19px 30px;flex:1;min-height:0;box-sizing:border-box}
main{flex:1;display:flex;flex-direction:column;min-width:0}.t{flex:1;display:flex;border-top:1px solid #37444f;min-height:0}
</style><app-header></app-header><div class="b"><experiment-sidebar></experiment-sidebar><main><page-title></page-title><view-tabs></view-tabs><run-controls></run-controls><div class="t"><runs-table></runs-table><charts-pane></charts-pane></div></main></div>`);

define('task-app', a => `<style>:host{display:flex;flex-direction:column;align-items:center;width:50px;height:50px;border-radius:5px;box-sizing:border-box;flex:none;${a('on')==='2'?'background:#ffffff14;box-shadow:inset 0 0 0 1px #ffffff10;':''}}
div{flex:1;display:flex;align-items:center;padding-top:4px}i{height:4px;border-radius:2px;margin-bottom:1px;width:${a('on')==='2'?20:8}px;background:${a('on')==='2'?'#d99fe8':a('on')?'#a39b9b':'transparent'}}</style><div><ui-icon name="${a('name')}"></ui-icon></div><i></i>`);

define('task-bar', `<style>
:host{display:flex;align-items:center;height:58px;box-sizing:border-box;border-top:1px solid #4a4048;flex:none;padding:1px 24.5px 0 24.5px;font-size:14.5px;color:#fff;
background:linear-gradient(90deg,#261e2f 0,#241f31 300px,#251d32 480px,#331a33 640px,#351c2e 760px,#35221f 900px,#352321 1000px,#3d1c22 1120px,#43161e 1240px,#46171a 1370px,#401913 1560px,#381a1a 1720px,#301b20 1918px)}
.w{display:flex;flex-direction:column;gap:0;margin-left:8px;line-height:20px}.w span{color:#cfc9d0}
.p{display:flex;align-items:center;width:275px;height:40px;border-radius:20px;background:linear-gradient(90deg,#4b344c,#4b363b);border:1px solid #665063;padding:0 6px 0 14px;font-size:17.5px;color:#d8d0d6;margin-left:16px}
.a{display:flex;gap:5px;margin-left:6px}.c{display:flex;flex-direction:column;align-items:flex-end;line-height:20px}
</style><ui-icon name="cloud"></ui-icon><div class="w"><fit-text w="24" style="--dy:-1px">8°C</fit-text><span><fit-text w="54" style="--dy:-1px">Molnigt</fit-text></span></div>
<ui-icon name="start" style="margin-left:440px"></ui-icon><div class="p"><ui-icon name="magnify"></ui-icon><fit-text w="53" style="margin-left:11px;--dy:0px">Search</fit-text><ui-icon name="xmas" style="margin-left:auto"></ui-icon></div>
<div class="a"><task-app name="taskview"></task-app><task-app name="copilot" on="1"></task-app><task-app name="explorer" on="1"></task-app><task-app name="edge" on="2"></task-app><task-app name="outlook"></task-app><task-app name="firefox"></task-app><task-app name="vscode" on="1"></task-app><task-app name="chrome" on="1"></task-app><task-app name="cmd" on="1"></task-app></div>
<ui-icon name="caret" style="margin-left:auto"></ui-icon><fit-text w="31" style="margin-left:26px;--dy:0px">ENG</fit-text><ui-icon name="wifi" style="margin-left:21px"></ui-icon><ui-icon name="sound" style="margin-left:10px"></ui-icon><ui-icon name="battery" style="margin-left:9px"></ui-icon>
<div class="c" style="margin-left:19px"><fit-text w="64" style="--dy:-1px">12:27 AM</fit-text><fit-text w="78" style="--dy:-1px">12/19/2024</fit-text></div><ui-icon name="bell" style="margin-left:10px"></ui-icon>`);

// Sets its text to the given width by tracking. Registered last, when every font and size around it is in place.
define('fit-text', `<style>:host{display:inline-block;white-space:nowrap;flex:none;transform:translateY(var(--dy,1px))}span{display:inline-block}</style><span><slot></slot></span>`, el => {
  const s = el.shadowRoot.querySelector('span');
  const n = [...el.textContent].length, w = +el.getAttribute('w');
  s.style.letterSpacing = (w - s.getBoundingClientRect().width) / n + 'px';
});
</script>
</body>
</html>
